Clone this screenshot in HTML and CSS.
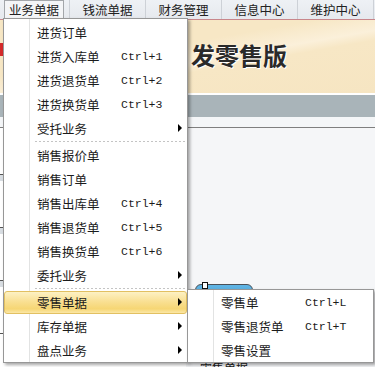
FILE: index.html
```html
<!doctype html>
<html lang="zh-CN">
<head>
  <meta charset="UTF-8">
  <meta name="viewport" content="width=device-width, initial-scale=1">
  <title>零售版</title>
  <link rel="stylesheet" href="styles.css">
</head>
<body>
<div class="app">
  <div class="menubar">
    <div class="menubar-item first"><span class="menubar-label active">业务单据</span></div>
    <div class="menubar-item"><span class="menubar-label">钱流单据</span></div>
    <div class="menubar-item"><span class="menubar-label">财务管理</span></div>
    <div class="menubar-item"><span class="menubar-label">信息中心</span></div>
    <div class="menubar-item"><span class="menubar-label">维护中心</span></div>
  </div>
  <div class="banner">
    <div class="logo"></div>
    <div class="title">发零售版</div>
  </div>
  <div class="toolbar"></div>
  <div class="tabs"></div>
  <div class="workspace">
    <div class="sidebar">
      <div class="side-row"></div>
      <div class="side-group"></div>
      <div class="side-row"></div>
      <div class="side-group"></div>
      <div class="side-row"></div>
      <div class="side-group"></div>
      <div class="side-row"></div>
    </div>
    <div class="desk">
      <div class="tool">
        <div class="tool-icon"><span class="tool-pin"></span></div>
        <div class="tool-name">零售单据</div>
      </div>
    </div>
  </div>
</div>

<div class="menu main-menu">
  <div class="menu-item"><span class="label">进货订单</span></div>
  <div class="menu-item"><span class="label">进货入库单</span><span class="shortcut">Ctrl+1</span></div>
  <div class="menu-item"><span class="label">进货退货单</span><span class="shortcut">Ctrl+2</span></div>
  <div class="menu-item"><span class="label">进货换货单</span><span class="shortcut">Ctrl+3</span></div>
  <div class="menu-item"><span class="label">受托业务</span><span class="arrow"></span></div>
  <div class="menu-sep"></div>
  <div class="menu-item"><span class="label">销售报价单</span></div>
  <div class="menu-item"><span class="label">销售订单</span></div>
  <div class="menu-item"><span class="label">销售出库单</span><span class="shortcut">Ctrl+4</span></div>
  <div class="menu-item"><span class="label">销售退货单</span><span class="shortcut">Ctrl+5</span></div>
  <div class="menu-item"><span class="label">销售换货单</span><span class="shortcut">Ctrl+6</span></div>
  <div class="menu-item"><span class="label">委托业务</span><span class="arrow"></span></div>
  <div class="menu-sep"></div>
  <div class="menu-item hover"><span class="label">零售单据</span><span class="arrow"></span></div>
  <div class="menu-item"><span class="label">库存单据</span><span class="arrow"></span></div>
  <div class="menu-item"><span class="label">盘点业务</span><span class="arrow"></span></div>
</div>

<div class="menu sub-menu">
  <div class="menu-item"><span class="label">零售单</span><span class="shortcut">Ctrl+L</span></div>
  <div class="menu-item"><span class="label">零售退货单</span><span class="shortcut">Ctrl+T</span></div>
  <div class="menu-item"><span class="label">零售设置</span></div>
</div>
</body>
</html>
```

FILE: styles.css
```css
body {
  margin: 0;
  font-family: "Noto Sans CJK SC", sans-serif;
  font-size: 12.5px;
  color: #1b1b1b;
  background: #f5f6f8;
}
.app {
  width: 375px;
  height: 367px;
  overflow: hidden;
  display: flex;
  flex-direction: column;
}
.app > * {
  flex-shrink: 0;
}

/* top menu bar */
.menubar {
  height: 19px;
  display: flex;
  background: linear-gradient(#eef1f5, #e6e9ee);
  border-bottom: 1px solid #c8868b;
}
.menubar-item {
  width: 75px;
  border-right: 1px solid #cdd1d7;
  display: flex;
  justify-content: center;
}
.menubar-item.first {
  width: 65px;
  padding-left: 4px;
  justify-content: flex-start;
}
.menubar-label {
  line-height: 19px;
  color: #222;
}
.menubar-label.active {
  width: 58px;
  height: 19px;
  text-align: center;
  border: 1px solid #a3a6aa;
  border-bottom: none;
  background: #f4f5f7;
  line-height: 18px;
}

/* banner */
.banner {
  height: 75px;
  box-sizing: border-box;
  display: flex;
  padding-top: 23px;
  background: linear-gradient(170deg, #f7e7c5 40%, #fbf0da 55%, #f7e7c5 62%, #f6e5c2);
  border-bottom: 2px solid #fff;
}
.logo {
  width: 40px;
  height: 13px;
  background: #d42a2a;
}
.title {
  margin-left: 151px;
  font-size: 24px;
  line-height: 24px;
  font-weight: bold;
  color: #2a2a2a;
  text-shadow: 1px 1px 0 #fff;
}
.toolbar {
  height: 22px;
  background: #a9b4b9;
}
.tabs {
  height: 10px;
  background: #f4f6f8;
  border-bottom: 1px solid #7f7f7f;
}

/* workspace */
.workspace {
  flex: 1 0 auto;
  height: 239px;
  overflow: hidden;
  display: flex;
}
.sidebar {
  width: 186px;
  display: flex;
  flex-direction: column;
  background: #fff;
}
.side-row {
  height: 46px;
  flex-shrink: 0;
  border-bottom: 1px solid #555;
}
.side-group {
  height: 6px;
  flex-shrink: 0;
  background: #d8dde2;
}
.desk {
  flex: 1;
  padding: 156px 0 0 9px;
}
.tool {
  width: 58px;
  display: flex;
  flex-direction: column;
  align-items: center;
}
.tool-icon {
  position: relative;
  width: 56px;
  height: 72px;
  border: 1px solid #4a5058;
  border-radius: 6px 6px 2px 2px;
  background: linear-gradient(#5fb4e4, #2f86c6);
}
.tool-pin {
  position: absolute;
  left: 6px;
  top: -3px;
  width: 4px;
  height: 5px;
  border: 1px solid #111;
  background: #fff;
}
.tool-name {
  margin-top: 3px;
  font-size: 12px;
  line-height: 14px;
}

/* popup menus */
.menu {
  position: absolute;
  background: #fff;
  border: 1px solid #979797;
  box-shadow: 2px 2px 3px rgba(0, 0, 0, 0.35);
}
.menu::before {
  content: "";
  position: absolute;
  left: 25px;
  top: 0;
  bottom: 0;
  width: 1px;
  background: #e2e3e3;
  border-right: 1px solid #fff;
}
.main-menu {
  left: 3px;
  top: 18px;
  width: 183px;
  padding-top: 1px;
}
.sub-menu {
  left: 187px;
  top: 289px;
  width: 185px;
  z-index: 2;
}
.menu-item {
  position: relative;
  height: 24px;
  display: flex;
  align-items: center;
  padding-left: 33px;
  box-sizing: border-box;
}
.menu-item.hover {
  z-index: 1;
}
.menu-item.hover::after {
  content: "";
  position: absolute;
  left: 0;
  right: 0;
  top: 1px;
  bottom: 0;
  border: 1px solid #e2c062;
  border-radius: 3px;
  background: linear-gradient(#fdf1c4, #f9e093 45%, #f6d674 80%, #fbe7a6);
  z-index: -1;
}
.label {
  width: 84px;
  flex-shrink: 0;
}
.shortcut {
  font-family: "Liberation Mono", monospace;
  font-size: 11.5px;
}
.arrow {
  margin-left: auto;
  margin-right: 5px;
  width: 0;
  height: 0;
  border-left: 4px solid #000;
  border-top: 4px solid transparent;
  border-bottom: 4px solid transparent;
}
.menu-sep {
  height: 3px;
  margin-left: 31px;
  background: repeating-linear-gradient(90deg, #c4c4c4 0 2px, transparent 2px 4px) 0 1px / 100% 1px no-repeat;
}
```
